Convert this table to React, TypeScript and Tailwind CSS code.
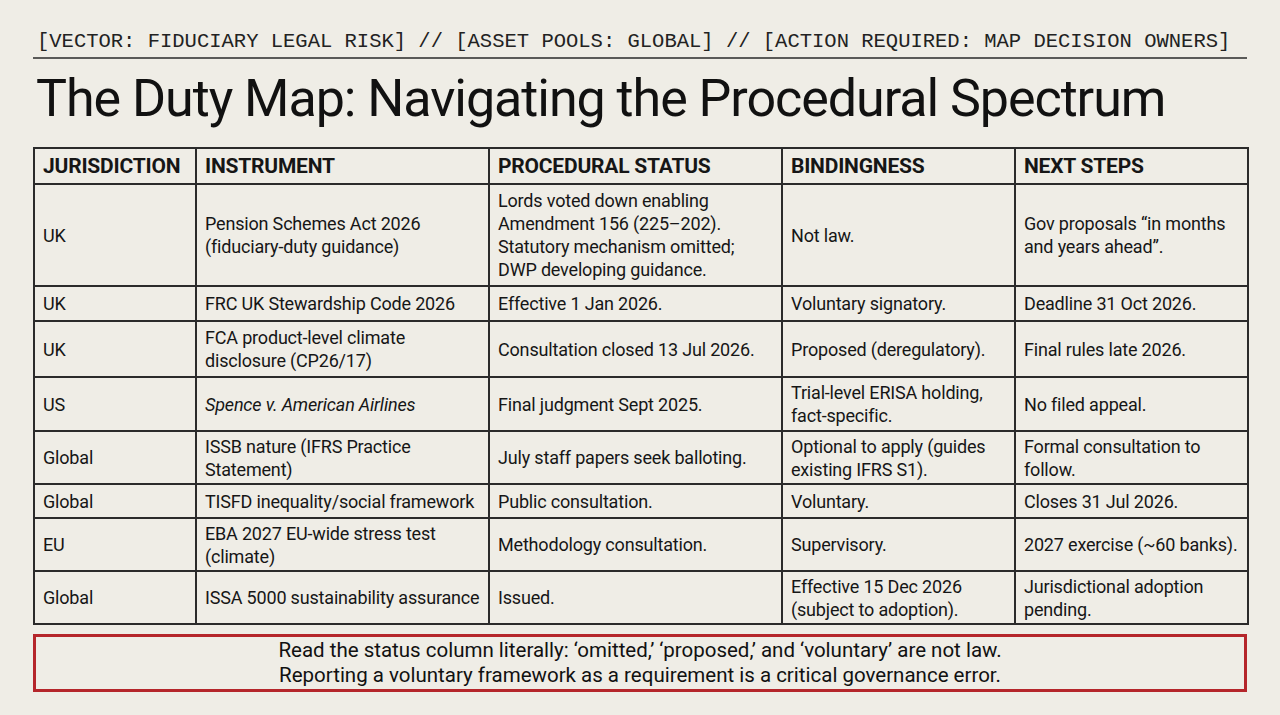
const rows = [
  {
    j: "UK",
    inst: ["Pension Schemes Act 2026", "(fiduciary-duty guidance)"],
    status: ["Lords voted down enabling", "Amendment 156 (225–202).", "Statutory mechanism omitted;", "DWP developing guidance."],
    bind: ["Not law."],
    next: ["Gov proposals “in months", "and years ahead”."],
    h: "h-[102px]",
  },
  {
    j: "UK",
    inst: ["FRC UK Stewardship Code 2026"],
    status: ["Effective 1 Jan 2026."],
    bind: ["Voluntary signatory."],
    next: ["Deadline 31 Oct 2026."],
    h: "h-[35px]",
  },
  {
    j: "UK",
    inst: ["FCA product-level climate", "disclosure (CP26/17)"],
    status: ["Consultation closed 13 Jul 2026."],
    bind: ["Proposed (deregulatory)."],
    next: ["Final rules late 2026."],
    h: "h-[56px]",
  },
  {
    j: "US",
    inst: ["Spence v. American Airlines"],
    italic: true,
    status: ["Final judgment Sept 2025."],
    bind: ["Trial-level ERISA holding,", "fact-specific."],
    next: ["No filed appeal."],
    h: "h-[54px]",
  },
  {
    j: "Global",
    inst: ["ISSB nature (IFRS Practice", "Statement)"],
    status: ["July staff papers seek balloting."],
    bind: ["Optional to apply (guides", "existing IFRS S1)."],
    next: ["Formal consultation to", "follow."],
    h: "h-[53px]",
  },
  {
    j: "Global",
    inst: ["TISFD inequality/social framework"],
    status: ["Public consultation."],
    bind: ["Voluntary."],
    next: ["Closes 31 Jul 2026."],
    h: "h-[34px]",
  },
  {
    j: "EU",
    inst: ["EBA 2027 EU-wide stress test", "(climate)"],
    status: ["Methodology consultation."],
    bind: ["Supervisory."],
    next: ["2027 exercise (~60 banks)."],
    h: "h-[53px]",
  },
  {
    j: "Global",
    inst: ["ISSA 5000 sustainability assurance"],
    status: ["Issued."],
    bind: ["Effective 15 Dec 2026", "(subject to adoption)."],
    next: ["Jurisdictional adoption", "pending."],
    h: "h-[53px]",
  },
];

function Lines({ lines }: { lines: string[] }) {
  return (
    <>
      {lines.map((l) => (
        <div key={l} className="whitespace-nowrap">
          {l}
        </div>
      ))}
    </>
  );
}

const cell = "border-2 border-[#2b2b2b] px-[8px] align-middle";

export default function App() {
  return (
    <div className="w-[1280px] h-[715px] bg-[#efede6] text-[#161616] font-['Roboto',sans-serif] overflow-hidden">
      <div className="w-[1214px] ml-[33px] pt-[31px]">
        <div className="border-b-2 border-[#5a5a58] pl-[4px] pb-[4px] font-['Liberation_Mono','DejaVu_Sans_Mono',monospace] text-[20.5px] leading-[22px] text-[#222] whitespace-nowrap">
          [VECTOR: FIDUCIARY LEGAL RISK] // [ASSET POOLS: GLOBAL] // [ACTION REQUIRED: MAP DECISION OWNERS]
        </div>

        <h1 className="pl-[3px] mt-[4px] text-[52px] leading-[72px] tracking-[-0.02em] text-[#111] whitespace-nowrap">
          The Duty Map: Navigating the Procedural Spectrum
        </h1>

        <table className="mt-[12px] w-[1214px] table-fixed border-collapse text-[18px] leading-[23px] tracking-[-0.01em]">
          <colgroup>
            <col className="w-[162px]" />
            <col className="w-[293px]" />
            <col className="w-[293px]" />
            <col className="w-[233px]" />
            <col className="w-[233px]" />
          </colgroup>
          <thead>
            <tr className="h-[36px] text-[21px] font-bold text-left tracking-[-0.01em]">
              <th className={cell}>JURISDICTION</th>
              <th className={cell}>INSTRUMENT</th>
              <th className={cell}>PROCEDURAL STATUS</th>
              <th className={cell}>BINDINGNESS</th>
              <th className={cell}>NEXT STEPS</th>
            </tr>
          </thead>
          <tbody>
            {rows.map((r, i) => (
              <tr key={i} className={r.h}>
                <td className={cell}>{r.j}</td>
                <td className={cell + (r.italic ? " italic" : "")}>
                  <Lines lines={r.inst} />
                </td>
                <td className={cell}>
                  <Lines lines={r.status} />
                </td>
                <td className={cell}>
                  <Lines lines={r.bind} />
                </td>
                <td className={cell}>
                  <Lines lines={r.next} />
                </td>
              </tr>
            ))}
          </tbody>
        </table>

        <div className="mt-[9px] h-[58px] border-[3px] border-[#b5262b] flex flex-col items-center justify-center text-[20.5px] leading-[25px] text-[#111]">
          <div>Read the status column literally: ‘omitted,’ ‘proposed,’ and ‘voluntary’ are not law.</div>
          <div>Reporting a voluntary framework as a requirement is a critical governance error.</div>
        </div>
      </div>
    </div>
  );
}
